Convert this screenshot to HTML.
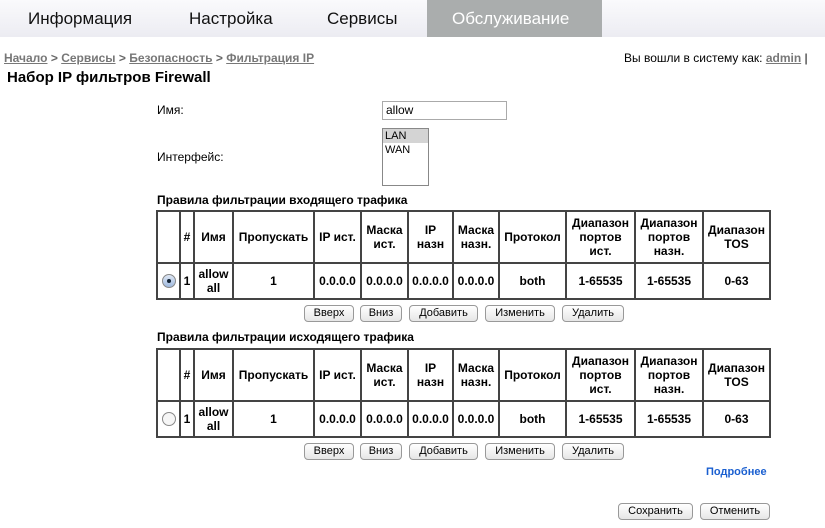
<!DOCTYPE html>
<html><head><meta charset="utf-8"><style>
body{margin:0;width:825px;height:528px;background:#fff;font-family:"Liberation Sans",Arial,sans-serif;position:relative;overflow:hidden;color:#000}
.nav{position:absolute;left:0;top:0;width:825px;height:37px;background:linear-gradient(#fafafc,#ececf2)}
.nav span{position:absolute;top:9px;font-size:17px;color:#111}
.act{position:absolute;left:427px;top:0;width:175px;height:37px;background:#aaadad}
.a{position:absolute;font-size:13px}
.crumb{color:#777;font-weight:bold;text-decoration:underline}
table{position:absolute;left:156px;border-collapse:collapse;font-size:12px;font-weight:bold;table-layout:fixed}
td{border:2px solid #444;text-align:center;padding:0;line-height:14px}
.b{position:absolute;height:15px;border:1px solid #999;border-radius:4px;background:linear-gradient(#fff,#e6e6e6);font-size:11px;text-align:center;line-height:15px}
.radio{display:inline-block;width:12px;height:12px;border:1px solid #888;border-radius:50%;background:linear-gradient(#dfe8f5,#9fb9de);position:relative;vertical-align:middle}
.radio.on::after{content:"";position:absolute;left:4px;top:4px;width:4px;height:4px;border-radius:50%;background:#123}
.radio.off{background:#f6f6f6}
</style></head><body>
<div class="nav"><div class="act"></div>
<span style="left:28px">Информация</span><span style="left:189px">Настройка</span><span style="left:327px">Сервисы</span><span style="left:452px;color:#fff">Обслуживание</span></div>
<div class="a" style="left:4px;top:51px;font-size:12px"><span class="crumb">Начало</span> <b style="color:#666">&gt;</b> <span class="crumb">Сервисы</span> <b style="color:#666">&gt;</b> <span class="crumb">Безопасность</span> <b style="color:#666">&gt;</b> <span class="crumb">Фильтрация IP</span></div>
<div class="a" style="left:624px;top:51px;font-size:12px">Вы вошли в систему как: <span class="crumb">admin</span> |</div>
<div class="a" style="left:7px;top:69px;font-size:15px;font-weight:bold">Набор IP фильтров Firewall</div>
<div class="a" style="left:157px;top:103px;font-size:12px">Имя:</div>
<div style="position:absolute;left:382px;top:101px;border:1px solid #aaa;font-size:12px;line-height:17px;padding-left:3px;box-sizing:border-box;width:125px;height:19px">allow</div>
<div class="a" style="left:157px;top:150px;font-size:12px">Интерфейс:</div>
<div style="position:absolute;left:382px;top:128px;width:45px;height:56px;border:1px solid #888;font-size:11px;line-height:14px"><div style="background:#d4d4d4;padding-left:2px">LAN</div><div style="padding-left:2px">WAN</div></div>
<div class="a" style="left:157px;top:193px;font-size:12px;font-weight:bold">Правила фильтрации входящего трафика</div>
<table style="top:210px;width:613px">
<colgroup><col style="width:23px"><col style="width:14px"><col style="width:39px"><col style="width:81px"><col style="width:47px"><col style="width:47px"><col style="width:45px"><col style="width:46px"><col style="width:67px"><col style="width:69px"><col style="width:68px"><col style="width:67px"></colgroup>
<tr style="height:52px"><td></td><td>#</td><td>Имя</td><td>Пропускать</td><td>IP ист.</td><td>Маска ист.</td><td>IP<br>назн</td><td>Маска назн.</td><td>Протокол</td><td>Диапазон портов ист.</td><td>Диапазон портов назн.</td><td>Диапазон TOS</td></tr>
<tr style="height:36px"><td><span class="radio on"></span></td><td>1</td><td>allow all</td><td>1</td><td>0.0.0.0</td><td>0.0.0.0</td><td>0.0.0.0</td><td>0.0.0.0</td><td>both</td><td>1-65535</td><td>1-65535</td><td>0-63</td></tr>
</table>
<div class="b" style="left:304px;top:305px;width:48px">Вверх</div>
<div class="b" style="left:360px;top:305px;width:40px">Вниз</div>
<div class="b" style="left:409px;top:305px;width:67px">Добавить</div>
<div class="b" style="left:485px;top:305px;width:68px">Изменить</div>
<div class="b" style="left:562px;top:305px;width:60px">Удалить</div>
<div class="a" style="left:157px;top:330px;font-size:12px;font-weight:bold">Правила фильтрации исходящего трафика</div>
<table style="top:348px;width:613px">
<colgroup><col style="width:23px"><col style="width:14px"><col style="width:39px"><col style="width:81px"><col style="width:47px"><col style="width:47px"><col style="width:45px"><col style="width:46px"><col style="width:67px"><col style="width:69px"><col style="width:68px"><col style="width:67px"></colgroup>
<tr style="height:52px"><td></td><td>#</td><td>Имя</td><td>Пропускать</td><td>IP ист.</td><td>Маска ист.</td><td>IP<br>назн</td><td>Маска назн.</td><td>Протокол</td><td>Диапазон портов ист.</td><td>Диапазон портов назн.</td><td>Диапазон TOS</td></tr>
<tr style="height:36px"><td><span class="radio off"></span></td><td>1</td><td>allow all</td><td>1</td><td>0.0.0.0</td><td>0.0.0.0</td><td>0.0.0.0</td><td>0.0.0.0</td><td>both</td><td>1-65535</td><td>1-65535</td><td>0-63</td></tr>
</table>
<div class="b" style="left:304px;top:443px;width:48px">Вверх</div>
<div class="b" style="left:360px;top:443px;width:40px">Вниз</div>
<div class="b" style="left:409px;top:443px;width:67px">Добавить</div>
<div class="b" style="left:485px;top:443px;width:68px">Изменить</div>
<div class="b" style="left:562px;top:443px;width:60px">Удалить</div>
<div class="a" style="left:706px;top:466px;font-size:11px;font-weight:bold;color:#1a5fd0">Подробнее</div>
<div class="b" style="left:618px;top:503px;width:73px">Сохранить</div>
<div class="b" style="left:700px;top:503px;width:68px">Отменить</div>
</body></html>
